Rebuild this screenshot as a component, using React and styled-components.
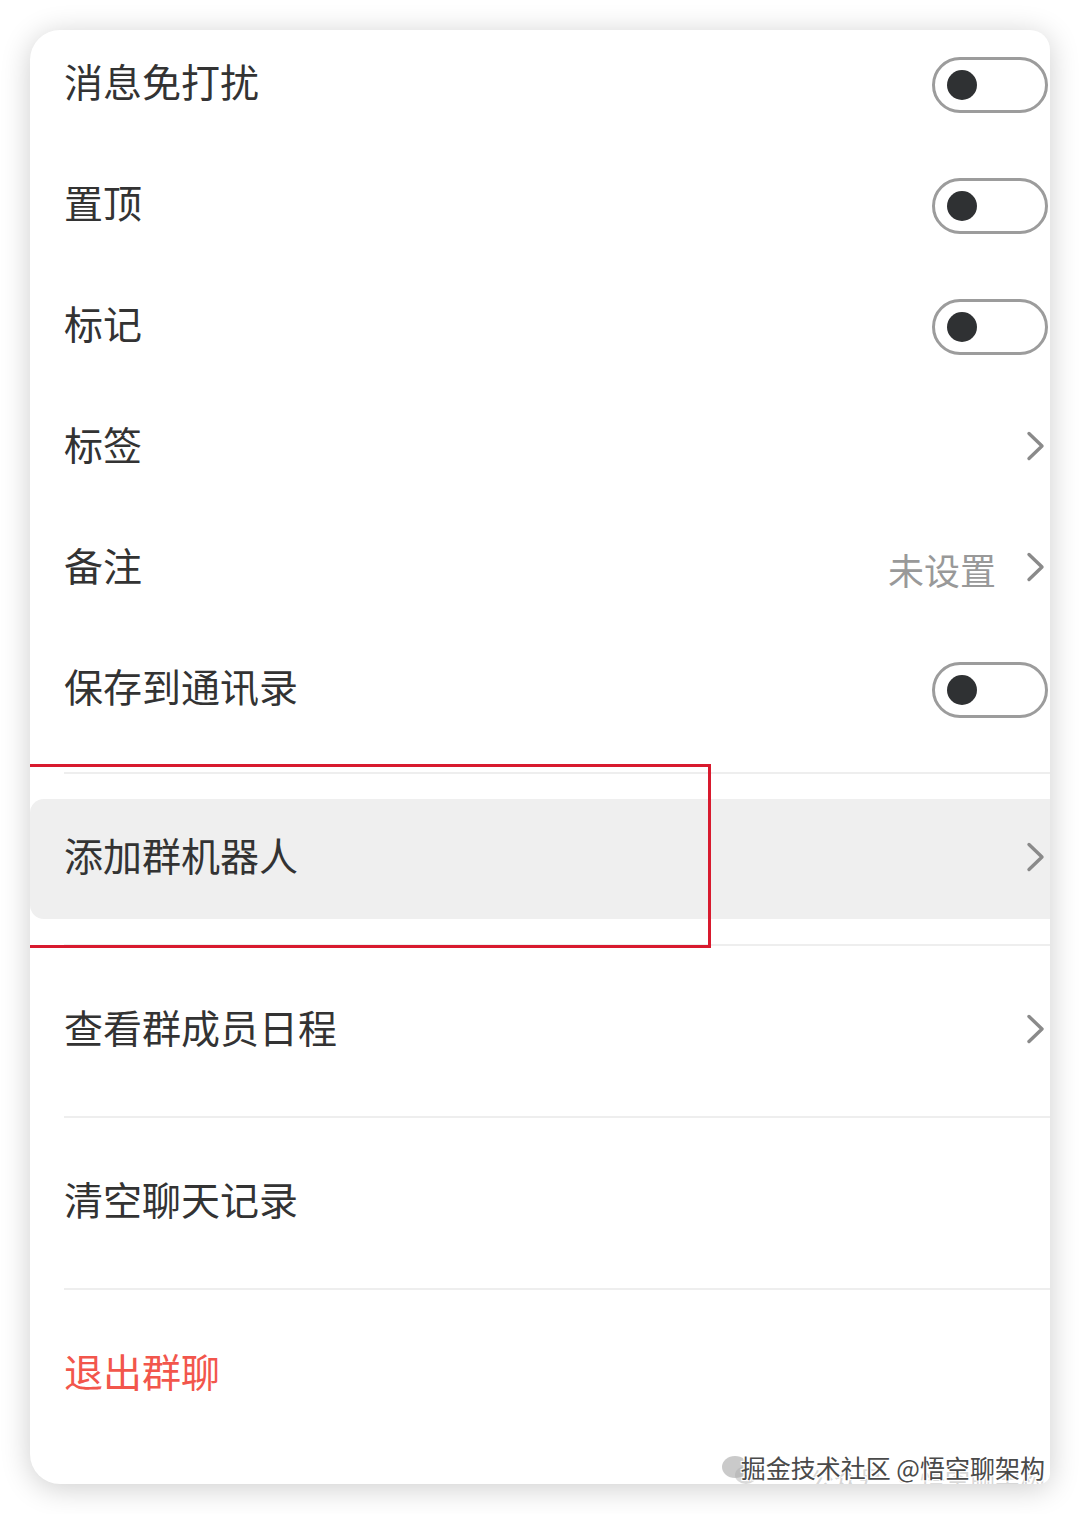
import React from "react";
import styled, { createGlobalStyle } from "styled-components";

const Global = createGlobalStyle`
  html, body { margin: 0; padding: 0; background: #ffffff; }
  body { font-family: "Noto Sans CJK SC", "Noto Sans", sans-serif; }
`;

const Page = styled.div`
  width: 1080px;
  height: 1514px;
  padding: 30px;
  box-sizing: border-box;
  background: #ffffff;
`;

const Card = styled.div`
  position: relative;
  width: 1020px;
  height: 1454px;
  background: #ffffff;
  border-radius: 30px 20px 10px 30px;
  box-shadow: 0 4px 30px rgba(0, 0, 0, 0.2);
  overflow: hidden;
  display: flex;
  flex-direction: column;
`;

const Row = styled.div`
  height: 121px;
  padding: 0 2px 15px 34px;
  box-sizing: border-box;
  display: flex;
  align-items: center;
  justify-content: space-between;
`;

const Label = styled.span`
  font-size: 39px;
  line-height: 1;
  margin-bottom: 5px;
  color: ${(p) => (p.$danger ? "#f2564c" : "#333333")};
`;

const Right = styled.div`
  display: flex;
  align-items: center;
  gap: 30px;
`;

const Value = styled.span`
  font-size: 36px;
  line-height: 1;
  color: #999999;
  padding-top: 4px;
`;

const Toggle = styled.div`
  width: 116px;
  height: 56px;
  box-sizing: border-box;
  border: 3px solid #9c9c9c;
  border-radius: 28px;
  display: flex;
  align-items: center;
  padding-left: 12px;
  margin-top: 4px;
`;

const Knob = styled.div`
  width: 30px;
  height: 30px;
  border-radius: 50%;
  background: #2f3133;
`;

const ChevronBox = styled.svg`
  width: 19px;
  height: 30px;
  margin-right: 3px;
  flex: none;
`;

const Chevron = () => (
  <ChevronBox viewBox="0 0 19 30">
    <path
      d="M3 2.5 L16 15 L3 27.5"
      fill="none"
      stroke="#8a8a8a"
      strokeWidth="3.4"
      strokeLinecap="round"
      strokeLinejoin="round"
    />
  </ChevronBox>
);

const Divider = styled.div`
  height: 2px;
  margin-left: 34px;
  background: #eeeeee;
  flex: none;
`;

const Spacer = styled.div`
  height: ${(p) => p.$h}px;
  flex: none;
`;

const Section = styled.div`
  position: relative;
  display: flex;
  flex-direction: column;
`;

const Item = styled.div`
  height: 170px;
  display: flex;
  align-items: center;
  flex: none;
`;

const ItemInner = styled.div`
  flex: 1;
  height: 120px;
  display: flex;
  align-items: center;
  justify-content: space-between;
  padding: 0 2px 4px 34px;
  box-sizing: border-box;
  background: ${(p) => (p.$active ? "#efefef" : "transparent")};
  border-radius: 14px 0 0 14px;
`;

const RedBox = styled.div`
  position: absolute;
  left: 0;
  top: -10px;
  width: 681px;
  height: 184px;
  box-sizing: border-box;
  border: 3px solid #d81a2e;
  border-left: none;
  pointer-events: none;
`;

const Watermark = styled.div`
  position: absolute;
  right: 5px;
  bottom: 2px;
  width: 325px;
  height: 30px;
`;

const WmText = styled.div`
  position: absolute;
  right: 0;
  top: 0;
  font-size: 25px;
  line-height: 30px;
  color: #4a4a4a;
  white-space: nowrap;
  text-shadow: -1px -1px 0 #fff, 1px -1px 0 #fff, -1px 1px 0 #fff, 1px 1px 0 #fff,
    0 0 3px #fff;
`;

const WmGhost = styled.div`
  position: absolute;
  right: 0;
  top: 12px;
  font-size: 25px;
  line-height: 30px;
  color: rgba(150, 150, 150, 0.4);
  white-space: nowrap;
`;

const WmIcon = styled.svg`
  position: absolute;
  left: 0;
  top: 2px;
  width: 40px;
  height: 34px;
`;

const toggleRows = [
  { label: "消息免打扰", type: "toggle" },
  { label: "置顶", type: "toggle" },
  { label: "标记", type: "toggle" },
  { label: "标签", type: "chevron" },
  { label: "备注", type: "chevron", value: "未设置" },
  { label: "保存到通讯录", type: "toggle" },
];

export default function App() {
  return (
    <>
      <Global />
      <Page>
        <Card>
          {toggleRows.map((r) => (
            <Row key={r.label}>
              <Label>{r.label}</Label>
              {r.type === "toggle" ? (
                <Toggle>
                  <Knob />
                </Toggle>
              ) : (
                <Right>
                  {r.value && <Value>{r.value}</Value>}
                  <Chevron />
                </Right>
              )}
            </Row>
          ))}
          <Spacer $h={16} />
          <Divider />
          <Section>
            <Item>
              <ItemInner $active>
                <Label>添加群机器人</Label>
                <Chevron />
              </ItemInner>
            </Item>
            <RedBox />
          </Section>
          <Divider />
          <Item>
            <ItemInner>
              <Label>查看群成员日程</Label>
              <Chevron />
            </ItemInner>
          </Item>
          <Divider />
          <Item>
            <ItemInner>
              <Label>清空聊天记录</Label>
            </ItemInner>
          </Item>
          <Divider />
          <Item>
            <ItemInner>
              <Label $danger>退出群聊</Label>
            </ItemInner>
          </Item>
          <Watermark>
            <WmIcon viewBox="0 0 40 34">
              <ellipse cx="15" cy="13" rx="13" ry="11" fill="rgba(150,150,150,0.5)" />
              <ellipse cx="26" cy="21" rx="11" ry="9" fill="rgba(170,170,170,0.45)" />
            </WmIcon>
            <WmGhost>公众号 · 悟空聊架构</WmGhost>
            <WmText>掘金技术社区 @悟空聊架构</WmText>
          </Watermark>
        </Card>
      </Page>
    </>
  );
}
